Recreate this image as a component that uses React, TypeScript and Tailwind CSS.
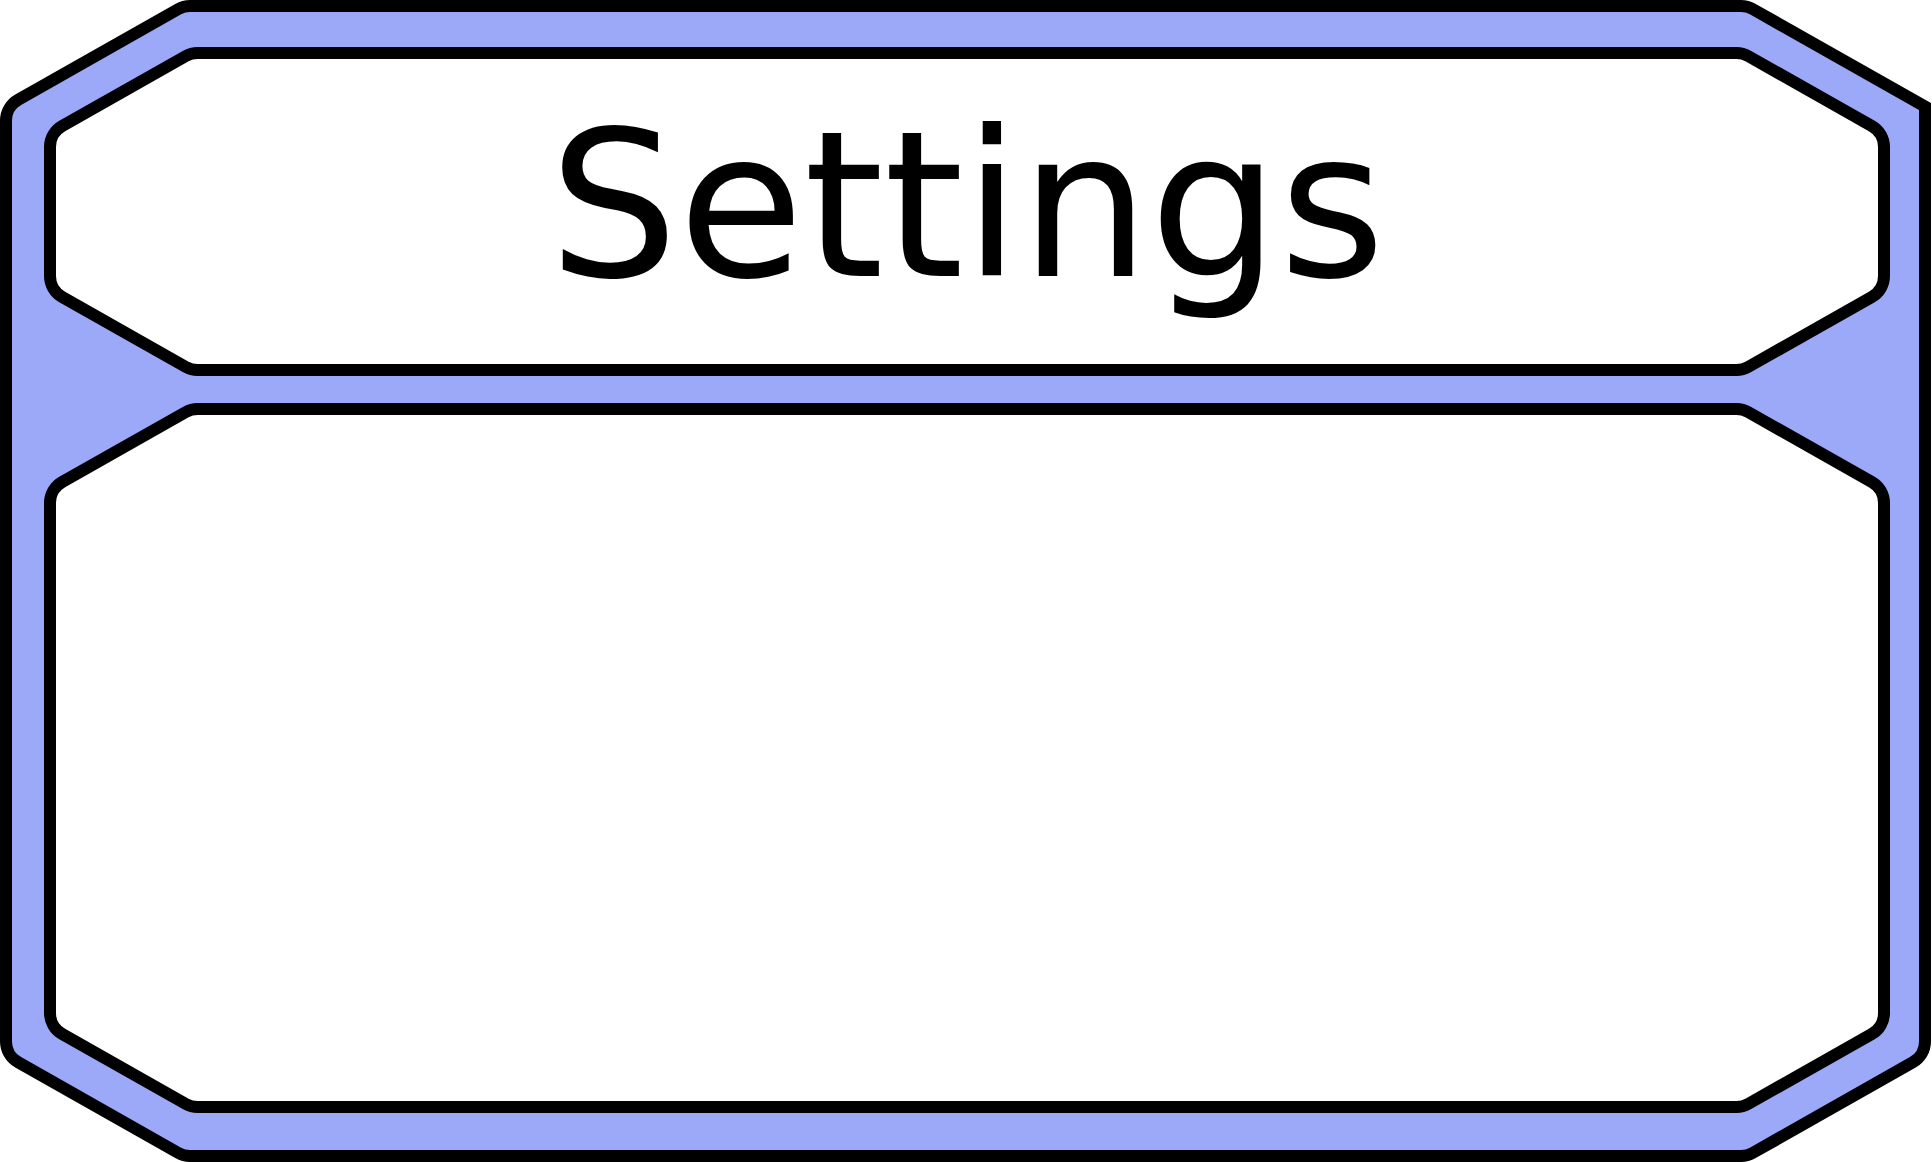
import type { ReactNode } from "react";

type CornerShape = { width: number; height: number; line: string };

const OUTER: CornerShape = {
  width: 200,
  height: 130,
  line: "M6 130V120.6A24 24 0 0 1 18.2 99.7L178.2 9.1A24 24 0 0 1 190 6H200",
};

const OUTER_SHARP: CornerShape = {
  width: 200,
  height: 130,
  line: "M6 130V106.6L178.2 9.1A24 24 0 0 1 190 6H200",
};

const INNER: CornerShape = {
  width: 160,
  height: 110,
  line: "M6 110V99.9A24 24 0 0 1 18.2 79L141.7 9.1A24 24 0 0 1 153.5 6H160",
};

const PLACES = [
  "top-0 left-0",
  "top-0 right-0 -scale-x-100",
  "bottom-0 right-0 -scale-100",
  "bottom-0 left-0 -scale-y-100",
];

function Corner({ shape, place, fill }: { shape: CornerShape; place: string; fill: string }) {
  const { width, height, line } = shape;
  return (
    <svg aria-hidden="true" width={width} height={height} viewBox={`0 0 ${width} ${height}`} className={`pointer-events-none absolute ${place}`}>
      <path d={`${line}V${height}Z`} className={fill} />
      <path d={line} fill="none" stroke="#000" strokeWidth="12" />
    </svg>
  );
}

// The bordered box is cut to a cross, leaving the four corners to the chamfer drawings.
function Panel({ className, children }: { className: string; children?: ReactNode }) {
  return (
    <section className={`relative ${className}`}>
      <div className="absolute inset-0 border-12 border-black bg-white [clip-path:polygon(160px_0,calc(100%-160px)_0,calc(100%-160px)_110px,100%_110px,100%_calc(100%-110px),calc(100%-160px)_calc(100%-110px),calc(100%-160px)_100%,160px_100%,160px_calc(100%-110px),0_calc(100%-110px),0_110px,160px_110px)]" />
      {PLACES.map((place) => (
        <Corner key={place} shape={INNER} place={place} fill="fill-white" />
      ))}
      {children}
    </section>
  );
}

export default function App() {
  return (
    <div className="flex min-h-screen bg-white pr-px">
      <main className="relative flex min-w-0 flex-1 flex-col gap-[27px] pt-[47px] pr-[41px] pb-[49px] pl-11">
        <div className="absolute inset-0 border-12 border-black bg-[#9ca9f9] [clip-path:polygon(200px_0,calc(100%-200px)_0,calc(100%-200px)_130px,100%_130px,100%_calc(100%-130px),calc(100%-200px)_calc(100%-130px),calc(100%-200px)_100%,200px_100%,200px_calc(100%-130px),0_calc(100%-130px),0_130px,200px_130px)]" />
        {PLACES.map((place, i) => (
          <Corner key={place} shape={i === 1 ? OUTER_SHARP : OUTER} place={place} fill="fill-[#9ca9f9]" />
        ))}
        <Panel className="flex min-h-[329px] items-center justify-center pb-3">
          <h1 className="relative font-['DejaVu_Sans',sans-serif] text-[204px] leading-none text-black">Settings</h1>
        </Panel>
        <Panel className="min-h-[240px] flex-1" />
      </main>
    </div>
  );
}
